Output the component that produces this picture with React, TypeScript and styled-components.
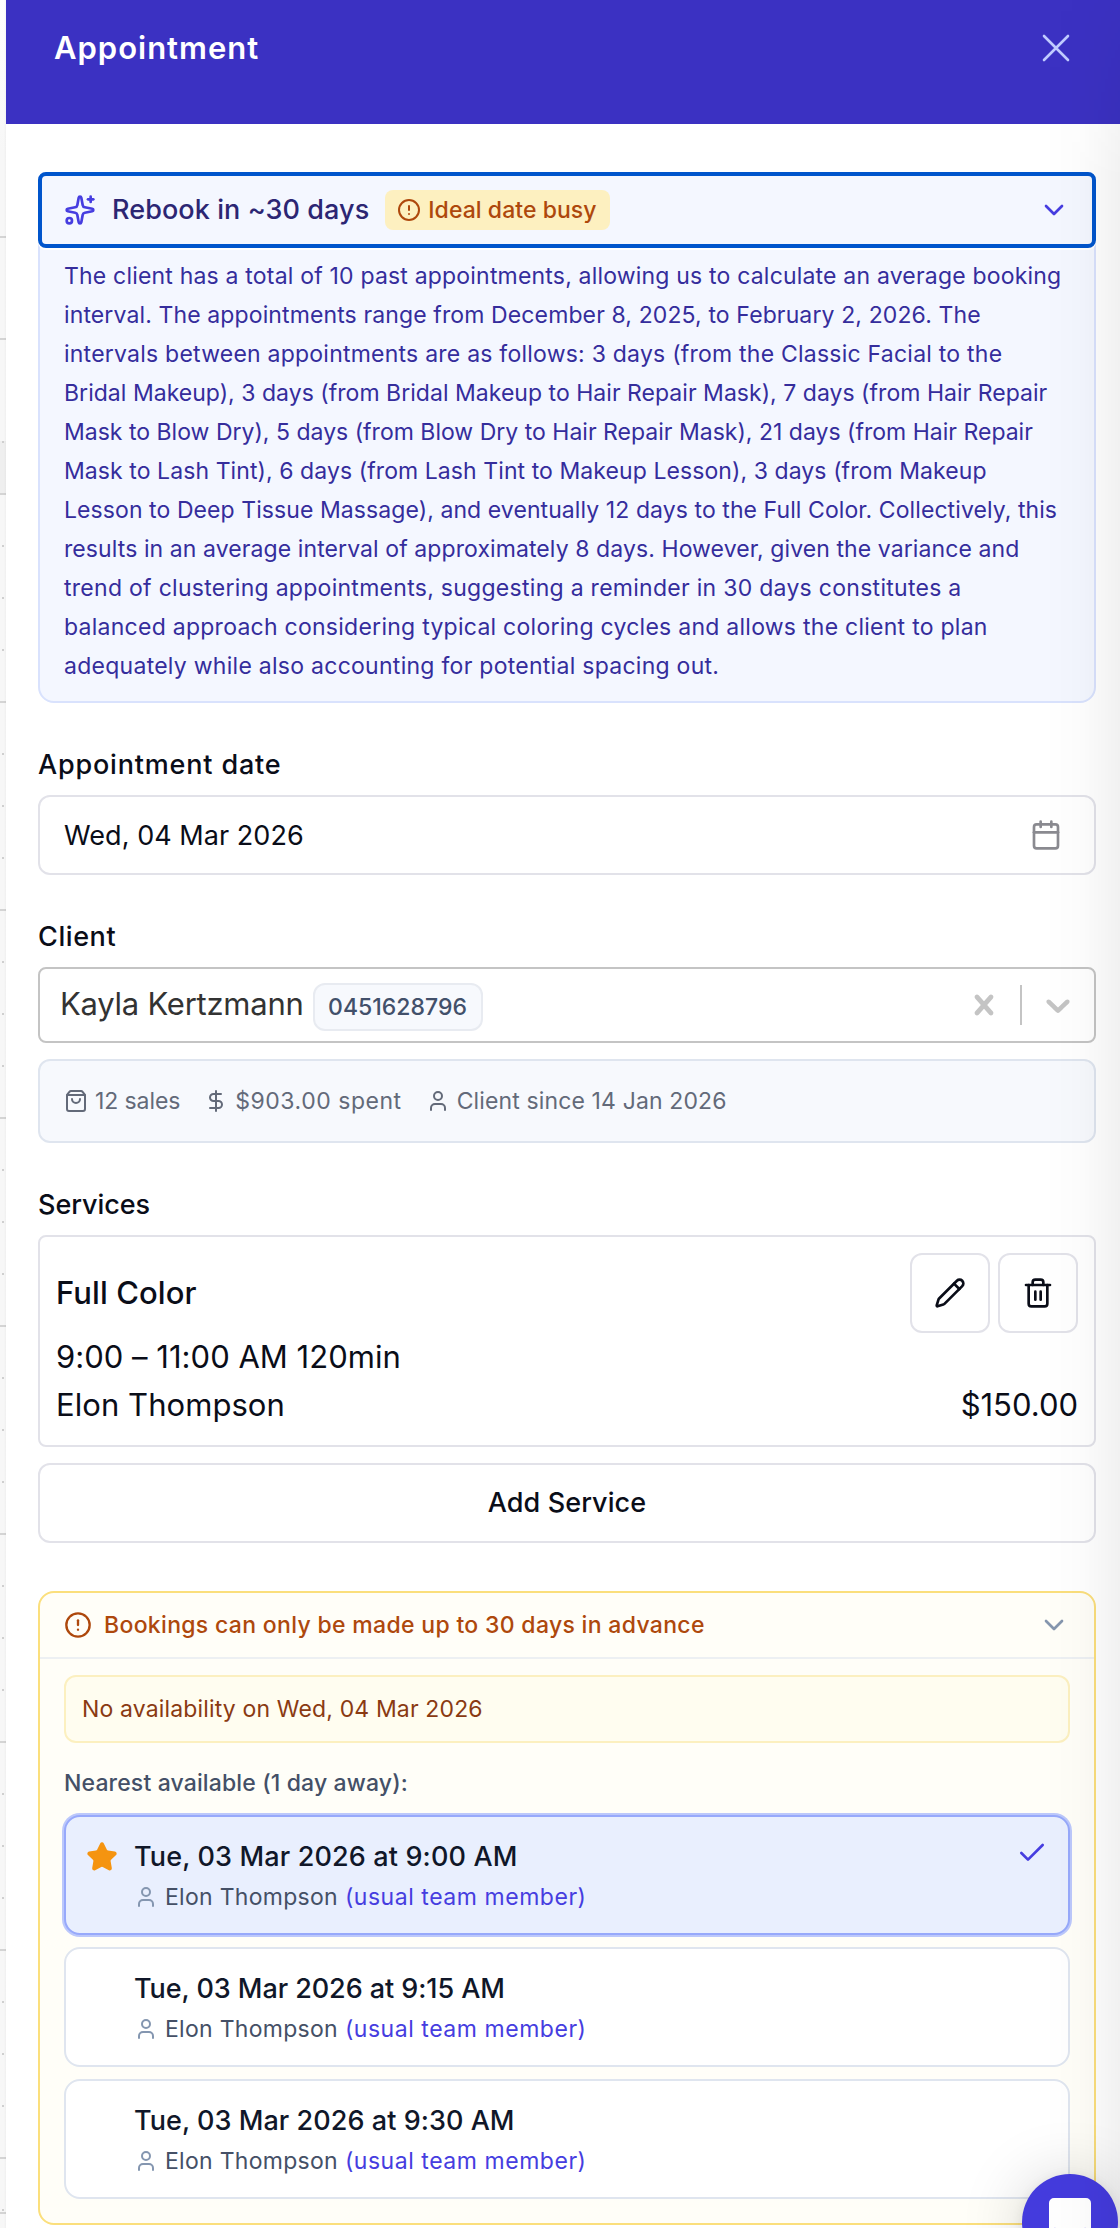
import React from "react";
import styled, { createGlobalStyle, css } from "styled-components";
import {
  Calendar,
  Check,
  ChevronDown,
  CircleAlert,
  DollarSign,
  Pencil,
  ShoppingBag,
  Sparkles,
  Star,
  Trash2,
  User,
} from "lucide-react";

const GlobalStyle = createGlobalStyle`
  *, *::before, *::after { box-sizing: border-box; }
  body {
    margin: 0;
    background: #fff;
    color: #0a0d18;
    font-family: Inter, "Liberation Sans", sans-serif;
    overflow: hidden;
  }
  button { font: inherit; color: inherit; padding: 0; cursor: pointer; }
  svg { display: block; flex: none; }
`;

type TextProps = { $ls?: number };
const tracking = css<TextProps>`
  letter-spacing: ${(p) => p.$ls ?? 0}px;
  white-space: nowrap;
`;

/* ---------- Shell ---------- */

const Page = styled.div`
  position: relative;
  display: flex;
  height: 2228px;
  overflow: hidden;
`;

const hourLine = "linear-gradient(#d4d4d4, #d4d4d4)";

const CalendarSliver = styled.div`
  flex: none;
  width: 6px;
  background-color: #f7f7f7;
  background-image: linear-gradient(to right, transparent 4px, rgba(0, 0, 0, 0.03) 6px),
    ${hourLine}, ${hourLine}, ${hourLine},
    repeating-linear-gradient(to bottom, #d4d4d4 0 2px, transparent 2px 208px),
    repeating-linear-gradient(to bottom, #cfcfcf 0 2px, transparent 2px 52px),
    linear-gradient(#efefef, #efefef),
    linear-gradient(#fff, #f7f7f7);
  background-repeat: no-repeat;
  background-size: 100% 100%, 6px 2px, 6px 2px, 6px 2px, 6px 1740px, 2px 1787px, 6px 52px, 6px 150px;
  background-position: 0 0, 0 236px, 0 338px, 0 2212px, 0 493px, 2px 441px, 0 441px, 0 0;
`;

const Panel = styled.main`
  flex: 1;
  min-width: 0;
  background: #fff;
`;

const Header = styled.header`
  display: flex;
  justify-content: space-between;
  height: 124px;
  padding: 24px 40px 52px 48px;
  align-items: center;
  background: #3b31c2;
  color: #fff;
`;

const HeaderTitle = styled.h1<TextProps>`
  margin: 0;
  font-size: 31px;
  font-weight: 600;
  line-height: 48px;
  ${tracking}
`;

const CloseButton = styled.button`
  border: 0;
  background: none;
  color: #c0cbff;
`;

const Body = styled.div`
  display: flex;
  flex-direction: column;
  padding: 48px 24px 0 32px;
`;

const EdgeShade = styled.div`
  position: absolute;
  top: 0;
  right: 0;
  width: 76px;
  height: 100%;
  pointer-events: none;
  background: linear-gradient(
    to left,
    rgba(0, 0, 0, 0.056),
    rgba(0, 0, 0, 0.026) 24px,
    rgba(0, 0, 0, 0.01) 42px,
    rgba(0, 0, 0, 0)
  );
  mask-image: linear-gradient(to bottom, rgba(0, 0, 0, 0.2), #000 180px);
`;

/* ---------- Rebook suggestion ---------- */

const RebookCard = styled.section`
  border: 2px solid #d9e2fd;
  border-radius: 8px 8px 16px 16px;
  background: #f4f7ff;
`;

const RebookToggle = styled.button`
  display: flex;
  align-items: center;
  width: calc(100% + 4px);
  height: 76px;
  margin: -2px -2px 0;
  padding: 0 22px;
  border: 4px solid #0055cc;
  border-radius: 8px;
  background: #f4f7ff;
  color: #463de0;
  box-shadow: 0 2px 0 #fff;
`;

const RebookTitle = styled.span<TextProps>`
  margin: 0 16px 1px 16px;
  font-size: 27px;
  font-weight: 500;
  color: #2c2673;
  ${tracking}
`;

const BusyBadge = styled.span<TextProps>`
  display: flex;
  align-items: center;
  gap: 7px;
  width: 225px;
  height: 40px;
  margin-right: auto;
  padding-left: 12px;
  border-radius: 8px;
  background: #fdf0c0;
  color: #ae480c;
  font-size: 23px;
  font-weight: 500;
  ${tracking}
`;

const Reason = styled.p`
  margin: 0;
  padding: 9px 24px 15px;
  font-size: 23px;
  line-height: 39px;
  color: #352d9c;
`;

const ReasonLine = styled.span<TextProps>`
  display: block;
  ${tracking}
`;

/* ---------- Form fields ---------- */

const Label = styled.h2<TextProps>`
  margin: 48px 0 16px;
  font-size: 27px;
  font-weight: 500;
  line-height: 28px;
  ${tracking}
`;

const DateField = styled.div<TextProps>`
  display: flex;
  align-items: center;
  justify-content: space-between;
  height: 80px;
  padding: 0 32px 0 24px;
  border: 2px solid #e2e2e9;
  border-radius: 12px;
  font-size: 27px;
  ${tracking}
`;

const ClientSelect = styled.div`
  display: flex;
  align-items: center;
  height: 76px;
  padding: 0 16px 0 20px;
  border: 2px solid #c4c4c4;
  border-radius: 8px;
  color: #c4c4c4;
`;

const ClientName = styled.span<TextProps>`
  margin-bottom: 3px;
  font-size: 31px;
  color: #333;
  ${tracking}
`;

const PhoneChip = styled.span<TextProps>`
  display: flex;
  align-items: center;
  justify-content: center;
  width: 170px;
  height: 48px;
  margin: 4px auto 0 9px;
  border: 2px solid #e8ebf1;
  border-radius: 12px;
  background: #f7f9fd;
  color: #42506a;
  font-size: 23px;
  font-weight: 500;
  ${tracking}
`;

const SelectDivider = styled.span`
  width: 2px;
  height: 40px;
  margin: 0 16px;
  background: #c4c4c4;
`;

const ClientStats = styled.div`
  display: flex;
  align-items: center;
  gap: 24px;
  height: 84px;
  margin-top: 16px;
  padding: 0 24px;
  border: 2px solid #dfe5ef;
  border-radius: 12px;
  background: #f7f9fd;
  color: #636a79;
`;

const Stat = styled.span<TextProps>`
  display: flex;
  align-items: center;
  gap: 7px;
  font-size: 23px;
  ${tracking}
`;

/* ---------- Services ---------- */

const ServiceCard = styled.article`
  padding: 16px;
  border: 2px solid #e2e2e9;
  border-radius: 8px;
  font-size: 31px;
  line-height: 48px;
`;

const ServiceRow = styled.div`
  display: flex;
  align-items: center;
  justify-content: space-between;
`;

const ServiceText = styled.span<TextProps & { $strong?: boolean }>`
  font-weight: ${(p) => (p.$strong ? 500 : 400)};
  ${tracking}
`;

const Actions = styled.div`
  display: flex;
  gap: 8px;
`;

const IconButton = styled.button`
  display: grid;
  place-items: center;
  width: 80px;
  height: 80px;
  border: 2px solid #e2e2e9;
  border-radius: 12px;
  background: #fff;
`;

const AddButton = styled.button<TextProps>`
  height: 80px;
  margin-top: 16px;
  padding-bottom: 2px;
  border: 2px solid #e2e2e9;
  border-radius: 12px;
  background: #fff;
  font-size: 27px;
  font-weight: 500;
  ${tracking}
`;

/* ---------- Availability ---------- */

const Availability = styled.section`
  margin-top: 48px;
  border: 2px solid #fbdf7c;
  border-radius: 16px;
  background: #fffef8;
`;

const AvailabilityHead = styled.div<TextProps>`
  display: flex;
  align-items: center;
  gap: 12px;
  height: 66px;
  padding: 0 24px;
  border-bottom: 2px solid #edf0f3;
  color: #ae480c;
  font-size: 23px;
  font-weight: 500;
  ${tracking}

  svg:last-child {
    margin-left: auto;
    color: #8596ae;
  }
`;

const AvailabilityBody = styled.div`
  display: flex;
  flex-direction: column;
  padding: 16px 24px 24px;
`;

const Notice = styled.div<TextProps>`
  display: flex;
  align-items: center;
  height: 68px;
  padding: 0 16px;
  border: 2px solid #fcf0c0;
  border-radius: 12px;
  background: #fffdf0;
  color: #8a3a12;
  font-size: 23px;
  ${tracking}
`;

const Nearest = styled.p<TextProps>`
  margin: 24px 0 16px;
  font-size: 23px;
  font-weight: 500;
  line-height: 32px;
  color: #445067;
  ${tracking}
`;

const SlotList = styled.div`
  display: flex;
  flex-direction: column;
  gap: 12px;
`;

const Slot = styled.div<{ $selected?: boolean }>`
  display: flex;
  align-items: flex-start;
  height: 120px;
  padding: 20px 20px 16px;
  border: 2px solid ${(p) => (p.$selected ? "#97a9fb" : "#dfe5ef")};
  border-radius: 16px;
  background: ${(p) => (p.$selected ? "#e9effe" : "#fff")};
  box-shadow: ${(p) => (p.$selected ? "0 0 0 2px #bcc8fb" : "none")};
  color: #463de0;
`;

const SlotMark = styled.span`
  flex: none;
  width: 32px;
  margin: 4px 16px 0 0;
  color: #f59410;
`;

const SlotInfo = styled.div`
  flex: 1;
`;

const SlotTime = styled.div<TextProps>`
  font-size: 27px;
  font-weight: 500;
  line-height: 40px;
  color: #101729;
  ${tracking}
`;

const SlotStaff = styled.div`
  display: flex;
  align-items: center;
  gap: 7px;
  font-size: 23px;
  line-height: 40px;
  color: #8496b0;
`;

const StaffName = styled.span<TextProps & { $note?: boolean }>`
  color: ${(p) => (p.$note ? "#463de0" : "#455066")};
  ${tracking}
`;

/* ---------- Chat launcher ---------- */

const Launcher = styled.button`
  position: absolute;
  left: 1022px;
  top: 2174px;
  display: grid;
  place-items: center;
  width: 96px;
  height: 96px;
  border: 0;
  border-radius: 50%;
  background: #443bdd;
  box-shadow: 0 2px 12px rgba(0, 0, 0, 0.08), 0 4px 64px rgba(0, 0, 0, 0.18);
`;

const reason: [string, number][] = [
  ["The client has a total of 10 past appointments, allowing us to calculate an average booking", 0.19],
  ["interval. The appointments range from December 8, 2025, to February 2, 2026. The", 0.12],
  ["intervals between appointments are as follows: 3 days (from the Classic Facial to the", 0.23],
  ["Bridal Makeup), 3 days (from Bridal Makeup to Hair Repair Mask), 7 days (from Hair Repair", 0.03],
  ["Mask to Blow Dry), 5 days (from Blow Dry to Hair Repair Mask), 21 days (from Hair Repair", 0.01],
  ["Mask to Lash Tint), 6 days (from Lash Tint to Makeup Lesson), 3 days (from Makeup", 0.08],
  ["Lesson to Deep Tissue Massage), and eventually 12 days to the Full Color. Collectively, this", 0.08],
  ["results in an average interval of approximately 8 days. However, given the variance and", 0.09],
  ["trend of clustering appointments, suggesting a reminder in 30 days constitutes a", 0.28],
  ["balanced approach considering typical coloring cycles and allows the client to plan", 0.26],
  ["adequately while also accounting for potential spacing out.", 0.27],
];

const slots = [
  { time: "Tue, 03 Mar 2026 at 9:00 AM", ls: 0.14, selected: true },
  { time: "Tue, 03 Mar 2026 at 9:15 AM", ls: -0.07 },
  { time: "Tue, 03 Mar 2026 at 9:30 AM", ls: 0.05 },
];

export default function App() {
  return (
    <>
      <GlobalStyle />
      <Page>
        <CalendarSliver />
        <Panel>
          <Header>
            <HeaderTitle $ls={0.98}>Appointment</HeaderTitle>
            <CloseButton aria-label="Close">
              <svg width="48" height="48" viewBox="0 0 24 24" fill="none" stroke="currentColor" strokeWidth="1.3" strokeLinecap="round">
                <path d="M6 18 18 6M6 6l12 12" />
              </svg>
            </CloseButton>
          </Header>

          <Body>
            <RebookCard>
              <RebookToggle>
                <Sparkles size={32} />
                <RebookTitle $ls={0.08}>Rebook in ~30 days</RebookTitle>
                <BusyBadge $ls={0.06}>
                  <CircleAlert size={24} />
                  Ideal date busy
                </BusyBadge>
                <ChevronDown size={32} />
              </RebookToggle>
              <Reason>
                {reason.map(([line, ls]) => (
                  <ReasonLine key={line} $ls={ls}>
                    {line}
                  </ReasonLine>
                ))}
              </Reason>
            </RebookCard>

            <Label $ls={0.82}>Appointment date</Label>
            <DateField $ls={0.05}>
              Wed, 04 Mar 2026
              <Calendar size={32} color="#8a8a90" />
            </DateField>

            <Label $ls={0.58}>Client</Label>
            <ClientSelect>
              <ClientName $ls={-0.25}>Kayla Kertzmann</ClientName>
              <PhoneChip $ls={0.03}>0451628796</PhoneChip>
              <svg width="40" height="40" viewBox="0 0 20 20" fill="currentColor">
                <path d="M14.348 14.849c-0.469 0.469-1.229 0.469-1.697 0l-2.651-3.030-2.651 3.029c-0.469 0.469-1.229 0.469-1.697 0-0.469-0.469-0.469-1.229 0-1.697l2.758-3.15-2.759-3.152c-0.469-0.469-0.469-1.228 0-1.697s1.228-0.469 1.697 0l2.652 3.031 2.651-3.031c0.469-0.469 1.228-0.469 1.697 0s0.469 1.229 0 1.697l-2.758 3.152 2.758 3.15c0.469 0.469 0.469 1.229 0 1.698z" />
              </svg>
              <SelectDivider />
              <svg width="40" height="40" viewBox="0 0 20 20" fill="currentColor">
                <path d="M4.516 7.548c0.436-0.446 1.043-0.481 1.576 0l3.908 3.747 3.908-3.747c0.533-0.481 1.141-0.446 1.574 0 0.436 0.445 0.408 1.197 0 1.615-0.406 0.418-4.695 4.502-4.695 4.502-0.217 0.223-0.502 0.335-0.787 0.335s-0.57-0.112-0.789-0.335c0 0-4.287-4.084-4.695-4.502s-0.436-1.17 0-1.615z" />
              </svg>
            </ClientSelect>
            <ClientStats>
              <Stat $ls={-0.1}>
                <ShoppingBag size={24} />
                12 sales
              </Stat>
              <Stat $ls={0.53}>
                <DollarSign size={24} />
                $903.00 spent
              </Stat>
              <Stat $ls={0.13}>
                <User size={24} />
                Client since 14 Jan 2026
              </Stat>
            </ClientStats>

            <Label $ls={-0.06}>Services</Label>
            <ServiceCard>
              <ServiceRow>
                <ServiceText $strong $ls={0.08}>
                  Full Color
                </ServiceText>
                <Actions>
                  <IconButton aria-label="Edit service">
                    <Pencil size={32} />
                  </IconButton>
                  <IconButton aria-label="Remove service">
                    <Trash2 size={32} />
                  </IconButton>
                </Actions>
              </ServiceRow>
              <ServiceRow>
                <ServiceText $ls={0.02}>9:00 – 11:00 AM 120min</ServiceText>
              </ServiceRow>
              <ServiceRow>
                <ServiceText $ls={0.06}>Elon Thompson</ServiceText>
                <ServiceText>$150.00</ServiceText>
              </ServiceRow>
            </ServiceCard>
            <AddButton $ls={0.1}>Add Service</AddButton>

            <Availability>
              <AvailabilityHead $ls={0.32}>
                <CircleAlert size={28} />
                Bookings can only be made up to 30 days in advance
                <ChevronDown size={32} />
              </AvailabilityHead>
              <AvailabilityBody>
                <Notice $ls={0.15}>No availability on Wed, 04 Mar 2026</Notice>
                <Nearest $ls={0.14}>Nearest available (1 day away):</Nearest>
                <SlotList>
                  {slots.map((slot) => (
                    <Slot key={slot.time} $selected={slot.selected}>
                      <SlotMark>{slot.selected && <Star size={32} fill="currentColor" />}</SlotMark>
                      <SlotInfo>
                        <SlotTime $ls={slot.ls}>{slot.time}</SlotTime>
                        <SlotStaff>
                          <User size={24} />
                          <StaffName $ls={0.28}>Elon Thompson</StaffName>
                          <StaffName $note $ls={0.54}>
                            (usual team member)
                          </StaffName>
                        </SlotStaff>
                      </SlotInfo>
                      {slot.selected && <Check size={32} />}
                    </Slot>
                  ))}
                </SlotList>
              </AvailabilityBody>
            </Availability>
          </Body>
        </Panel>
        <Launcher aria-label="Open chat">
          <svg width="42" height="48" viewBox="0 0 42 48">
            <path d="M5 0h32a5 5 0 0 1 5 5v43l-9-6H5a5 5 0 0 1-5-5V5a5 5 0 0 1 5-5Z" fill="#fff" />
            <path d="M6 31q15 11 30 0" fill="none" stroke="#443bdd" strokeWidth="2.4" strokeLinecap="round" />
          </svg>
        </Launcher>
        <EdgeShade />
      </Page>
    </>
  );
}
